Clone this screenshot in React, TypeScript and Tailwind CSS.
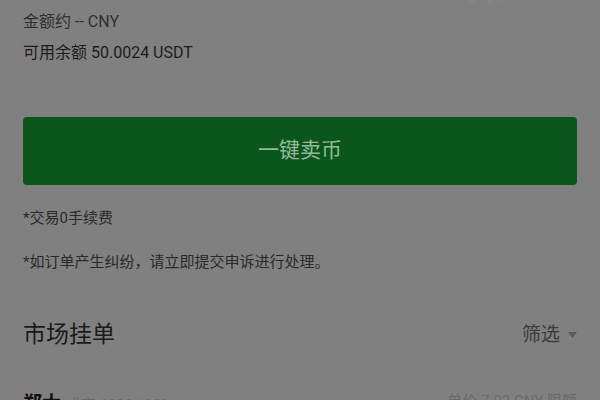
import React from "react";

const font = { fontFamily: '"Roboto", "Noto Sans CJK SC", sans-serif' };

export default function App() {
  return (
    <div className="h-[400px] w-[600px] overflow-hidden bg-[#808080]" style={font}>
      <div className="-mt-[14px] flex flex-col px-[23px]">
        {/* cut-off row above */}
        <div className="flex h-[18px] items-center justify-end">
          <span className="text-[15px] text-[#9a8a8a] opacity-60">参考价 7.05 CNY</span>
        </div>

        <div className="mt-[8px] text-[16px] leading-[20px] text-[#2f2f2f]">金额约 -- CNY</div>
        <div className="mt-[11px] text-[16px] leading-[20px] text-[#1c1c1c]">可用余额 50.0024 USDT</div>

        <button className="mt-[54px] flex h-[68px] w-full items-center justify-center rounded-[4px] bg-[#0a561b] text-[21px] text-[#97b89d]">
          一键卖币
        </button>

        <div className="mt-[23px] text-[15px] leading-[20px] text-[#2a2a2a]">*交易0手续费</div>
        <div className="mt-[24px] text-[15px] leading-[20px] text-[#2a2a2a]">*如订单产生纠纷，请立即提交申诉进行处理。</div>

        <div className="mt-[48px] flex items-center justify-between">
          <span className="text-[23px] leading-[30px] text-[#1a1a1a]">市场挂单</span>
          <span className="flex items-center gap-[8px] text-[19px] text-[#3a3a3a]">
            筛选
            <svg width="9" height="6" viewBox="0 0 9 6"><path d="M0 0h9L4.5 6z" fill="#5a5a5a" /></svg>
          </span>
        </div>

        <div className="mt-[40px] flex items-start justify-between">
          <span className="text-[19px] font-bold text-[#111]">郑大 <span className="text-[15px] font-normal text-[#6a6a6a]">成交 1280 | 98%</span></span>
          <span className="text-[15px] text-[#6a6a6a]">单价 7.02 CNY 限额</span>
        </div>
      </div>
    </div>
  );
}
